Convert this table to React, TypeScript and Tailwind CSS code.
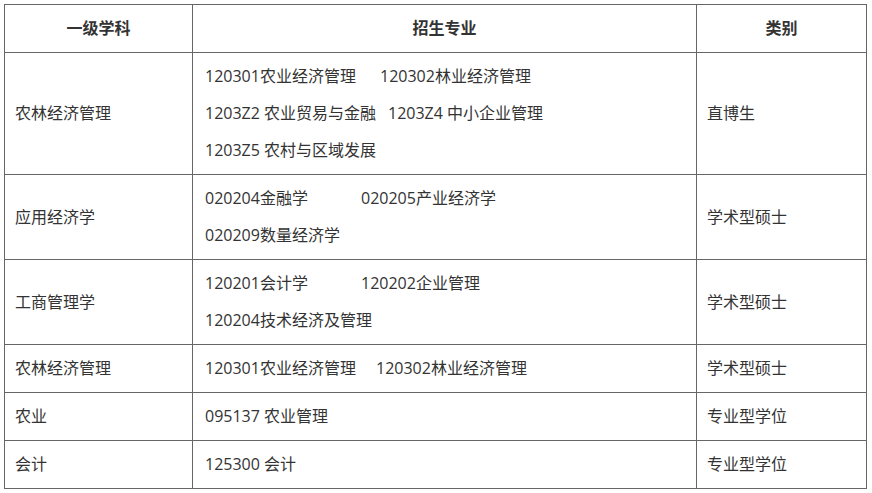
import React from "react";

type Row = {
  subject: string;
  majors: string[][];
  widths?: number[];
  type: string;
};

const rows: Row[] = [
  {
    subject: "农林经济管理",
    majors: [
      ["120301农业经济管理", "120302林业经济管理"],
      ["1203Z2 农业贸易与金融", "1203Z4 中小企业管理"],
      ["1203Z5 农村与区域发展"],
    ],
    widths: [175, 183, 0],
    type: "直博生",
  },
  {
    subject: "应用经济学",
    majors: [["020204金融学", "020205产业经济学"], ["020209数量经济学"]],
    widths: [156, 0],
    type: "学术型硕士",
  },
  {
    subject: "工商管理学",
    majors: [["120201会计学", "120202企业管理"], ["120204技术经济及管理"]],
    widths: [156, 0],
    type: "学术型硕士",
  },
  {
    subject: "农林经济管理",
    majors: [["120301农业经济管理", "120302林业经济管理"]],
    widths: [171],
    type: "学术型硕士",
  },
  { subject: "农业", majors: [["095137 农业管理"]], type: "专业型学位" },
  { subject: "会计", majors: [["125300 会计"]], type: "专业型学位" },
];

// first item gets a fixed box so the second one lines up like the original spacing
const widthClass: Record<number, string> = {
  175: "w-[175px]",
  183: "w-[183px]",
  156: "w-[156px]",
  171: "w-[171px]",
};

const App = () => {
  return (
    <div
      className="w-[872px] h-[493px] bg-white pt-[4px] pl-[4px] text-[16px] text-[#333333]"
      style={{ fontFamily: '"Open Sans", "Noto Sans CJK SC", sans-serif' }}
    >
      <table className="w-[862px] table-fixed border-collapse">
        <colgroup>
          <col className="w-[188px]" />
          <col className="w-[504px]" />
          <col className="w-[170px]" />
        </colgroup>
        <thead>
          <tr>
            {["一级学科", "招生专业", "类别"].map((h) => (
              <th
                key={h}
                className="border border-[#666666] py-[5px] leading-[37px] font-bold text-center text-[#333333]"
              >
                {h}
              </th>
            ))}
          </tr>
        </thead>
        <tbody>
          {rows.map((row, i) => (
            <tr key={i}>
              <td className="border border-[#666666] py-[5px] pl-[10px] leading-[37px] align-middle">
                {row.subject}
              </td>
              <td className="border border-[#666666] py-[5px] pl-[12px] leading-[37px] align-middle">
                {row.majors.map((line, j) => (
                  <div key={j} className="whitespace-nowrap">
                    {line.length > 1 ? (
                      <>
                        <span
                          className={`inline-block ${widthClass[row.widths?.[j] ?? 0] ?? ""}`}
                        >
                          {line[0]}
                        </span>
                        <span>{line[1]}</span>
                      </>
                    ) : (
                      <span>{line[0]}</span>
                    )}
                  </div>
                ))}
              </td>
              <td className="border border-[#666666] py-[5px] pl-[10px] leading-[37px] align-middle">
                {row.type}
              </td>
            </tr>
          ))}
        </tbody>
      </table>
    </div>
  );
};

export default App;
